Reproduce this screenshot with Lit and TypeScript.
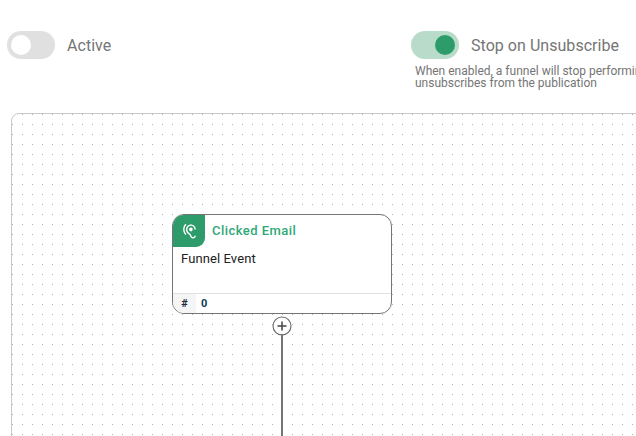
import { LitElement, html, css } from "lit";
import { customElement } from "lit/decorators.js";

@customElement("app-root")
export class AppRoot extends LitElement {
  static styles = css`
    :host { display: block; width: 636px; height: 436px; overflow: hidden; background: #fff; font-family: Roboto, sans-serif; position: relative; }
    .top { display: flex; height: 113px; box-sizing: border-box; padding: 31px 0 0 7px; }
    .col1 { width: 404px; flex: none; }
    .col2 { flex: 1; min-width: 0; }
    .row { display: flex; align-items: center; gap: 12px; height: 28px; }
    .sw { width: 48px; height: 28px; border-radius: 14px; background: #e0e0e0; position: relative; flex: none; }
    .sw i { position: absolute; top: 4px; left: 4px; width: 20px; height: 20px; border-radius: 50%; background: #fff; }
    .sw.on { background: #b8dcc9; }
    .sw.on i { left: 24px; background: #2e9b6b; }
    .lbl { font-size: 16px; color: #757575; letter-spacing: 0.04px; white-space: nowrap; }
    .hint { font-size: 12px; line-height: 12px; color: #757575; margin: 6px 0 0 4px; white-space: nowrap; width: 300px; }
    .canvas { margin-left: 11px; width: 700px; height: 400px; box-sizing: border-box; border: 1px solid #c8c8c8; border-radius: 8px; position: relative;
      background-image: radial-gradient(circle at 0.5px 0.5px, #b0b0b0 0.71px, transparent 0.72px); background-size: 10px 10px; background-position: 0 0; }
    .node { position: absolute; left: 160px; top: 100px; width: 220px; height: 100px; box-sizing: border-box; border: 1px solid #757575; border-radius: 12px; background: #fff; overflow: hidden; display: flex; flex-direction: column; }
    .head { display: flex; align-items: center; height: 32px; flex: none; }
    .ic { width: 32px; height: 32px; background: #2e9b6b; border-bottom-right-radius: 9px; display: flex; align-items: center; justify-content: center; padding: 1px 0 0 1px; box-sizing: border-box; }
    .ic svg { display: block; }
    .title { margin: 0 0 2px 7px; font-size: 13px; font-weight: 500; color: #2ea876; letter-spacing: 0.45px; }
    .body { flex: 1; padding: 4px 8px; font-size: 13px; line-height: 16px; color: #212121; letter-spacing: 0.1px; }
    .foot { height: 20px; border-top: 1px solid #e0e0e0; display: flex; font-size: 11px; font-weight: 700; box-sizing: border-box; flex: none; color: #1c2b36; }
    .foot b { width: 23px; background: #f5f5f5; text-align: center; line-height: 19px; font-weight: 700; }
    .foot span { margin-left: 5px; line-height: 19px; color: #0d3b52; }
    .plus { position: absolute; left: 260px; top: 202px; width: 20px; height: 20px; }
    .line { position: absolute; left: 269px; top: 220px; width: 2px; height: 120px; background: #757575; }
  `;
  render() {
    return html`
      <div class="top">
        <div class="col1"><div class="row"><div class="sw"><i></i></div><span class="lbl">Active</span></div></div>
        <div class="col2">
          <div class="row"><div class="sw on"><i></i></div><span class="lbl">Stop on Unsubscribe</span></div>
          <div class="hint">When enabled, a funnel will stop performing when a contact<br />unsubscribes from the publication</div>
        </div>
      </div>
      <div class="canvas">
        <div class="node">
          <div class="head">
            <div class="ic">
              <svg width="17" height="17" viewBox="0 0 24 24" fill="#fff"><path d="M17 20c-.29 0-.56-.06-.76-.15-.71-.37-1.21-.88-1.71-2.38-.51-1.56-1.47-2.29-2.39-3-.79-.61-1.61-1.24-2.32-2.53C9.29 10.98 9 9.93 9 9c0-2.8 2.2-5 5-5s5 2.2 5 5h2c0-3.93-3.07-7-7-7S7 5.07 7 9c0 1.26.38 2.65 1.07 3.9.91 1.65 1.98 2.48 2.85 3.15.81.62 1.39 1.07 1.71 2.05.6 1.82 1.37 2.84 2.73 3.55.51.23 1.07.35 1.64.35 2.21 0 4-1.79 4-4h-2c0 1.1-.9 2-2 2zM7.64 2.64 6.22 1.22C4.23 3.21 3 5.96 3 9s1.23 5.79 3.22 7.78l1.41-1.41C6.01 13.74 5 11.49 5 9s1.01-4.74 2.64-6.36zM11.5 9c0 1.38 1.12 2.5 2.5 2.5s2.5-1.12 2.5-2.5-1.12-2.5-2.5-2.5-2.5 1.12-2.5 2.5z"/></svg>
            </div>
            <span class="title">Clicked Email</span>
          </div>
          <div class="body">Funnel Event</div>
          <div class="foot"><b>#</b><span>0</span></div>
        </div>
        <svg class="plus" viewBox="0 0 20 20" fill="none"><circle cx="10" cy="10" r="9" fill="#fff" stroke="#666" stroke-width="1.1"/><path d="M5.5 10h9M10 5.5v9" stroke="#444" stroke-width="1.5"/></svg>
        <div class="line"></div>
      </div>
    `;
  }
}
